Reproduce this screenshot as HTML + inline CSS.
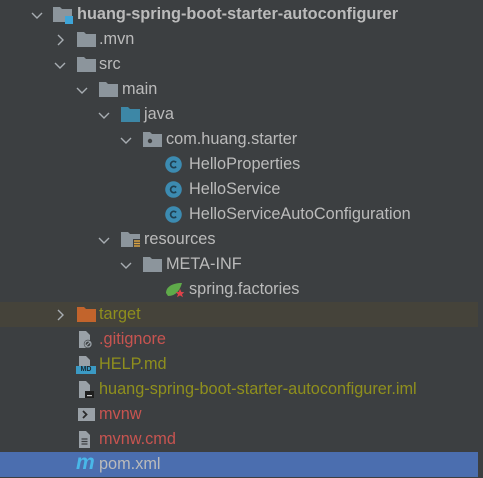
<!DOCTYPE html><html><head><style>
body{margin:0;width:483px;height:478px;background:#3c3f41;overflow:hidden;font-family:"Liberation Sans",sans-serif;font-size:16.3px;color:#bbbbbb}
.r{position:absolute;left:0;width:478px;height:25px}
.t{position:absolute;top:3px;white-space:nowrap}
.c{position:absolute;top:7px;width:12px;height:12px}
.i{position:absolute;top:4px;width:19px;height:17px}
</style></head><body>

<div class="r" style="top:2px"><svg class="c" style="left:31px" viewBox="0 0 12 12"><path d="M1 4l5 5 5-5" fill="none" stroke="#a8adb2" stroke-width="1.4"/></svg><svg class="i" style="left:53px" viewBox="0 0 19 17"><path d="M0 1h7l2 2h10v13H0z" fill="#8c959c"/></svg><div style="position:absolute;left:65px;top:14px;width:8px;height:8px;background:#3ea5d8"></div><div class="t" style="left:77px;font-weight:bold">huang-spring-boot-starter-autoconfigurer</div></div>
<div class="r" style="top:27px"><svg class="c" style="left:54px" viewBox="0 0 12 12"><path d="M4 1l5 5-5 5" fill="none" stroke="#a8adb2" stroke-width="1.4"/></svg><svg class="i" style="left:77px" viewBox="0 0 19 17"><path d="M0 1h7l2 2h10v13H0z" fill="#8c959c"/></svg><div class="t" style="left:99px">.mvn</div></div>
<div class="r" style="top:52px"><svg class="c" style="left:54px" viewBox="0 0 12 12"><path d="M1 4l5 5 5-5" fill="none" stroke="#a8adb2" stroke-width="1.4"/></svg><svg class="i" style="left:77px" viewBox="0 0 19 17"><path d="M0 1h7l2 2h10v13H0z" fill="#8c959c"/></svg><div class="t" style="left:99px">src</div></div>
<div class="r" style="top:77px"><svg class="c" style="left:76px" viewBox="0 0 12 12"><path d="M1 4l5 5 5-5" fill="none" stroke="#a8adb2" stroke-width="1.4"/></svg><svg class="i" style="left:99px" viewBox="0 0 19 17"><path d="M0 1h7l2 2h10v13H0z" fill="#8c959c"/></svg><div class="t" style="left:122px">main</div></div>
<div class="r" style="top:102px"><svg class="c" style="left:98px" viewBox="0 0 12 12"><path d="M1 4l5 5 5-5" fill="none" stroke="#a8adb2" stroke-width="1.4"/></svg><svg class="i" style="left:121px" viewBox="0 0 19 17"><path d="M0 1h7l2 2h10v13H0z" fill="#3d87a6"/></svg><div class="t" style="left:144px">java</div></div>
<div class="r" style="top:127px"><svg class="c" style="left:120px" viewBox="0 0 12 12"><path d="M1 4l5 5 5-5" fill="none" stroke="#a8adb2" stroke-width="1.4"/></svg><svg class="i" style="left:143px" viewBox="0 0 19 17"><path d="M0 1h7l2 2h10v13H0z" fill="#8c959c"/><circle cx="7" cy="10" r="2.2" fill="#3c3f41"/></svg><div class="t" style="left:166px">com.huang.starter</div></div>
<div class="r" style="top:152px"><svg class="i" style="left:165px;width:17px;height:17px" viewBox="0 0 16 16"><circle cx="8" cy="8" r="7.8" fill="#3c8bb1"/><path d="M10.5 6a3 3 0 1 0 0 4" fill="none" stroke="#1f3f50" stroke-width="1.6"/></svg><div class="t" style="left:189px">HelloProperties</div></div>
<div class="r" style="top:177px"><svg class="i" style="left:165px;width:17px;height:17px" viewBox="0 0 16 16"><circle cx="8" cy="8" r="7.8" fill="#3c8bb1"/><path d="M10.5 6a3 3 0 1 0 0 4" fill="none" stroke="#1f3f50" stroke-width="1.6"/></svg><div class="t" style="left:189px">HelloService</div></div>
<div class="r" style="top:202px"><svg class="i" style="left:165px;width:17px;height:17px" viewBox="0 0 16 16"><circle cx="8" cy="8" r="7.8" fill="#3c8bb1"/><path d="M10.5 6a3 3 0 1 0 0 4" fill="none" stroke="#1f3f50" stroke-width="1.6"/></svg><div class="t" style="left:189px">HelloServiceAutoConfiguration</div></div>
<div class="r" style="top:227px"><svg class="c" style="left:98px" viewBox="0 0 12 12"><path d="M1 4l5 5 5-5" fill="none" stroke="#a8adb2" stroke-width="1.4"/></svg><svg class="i" style="left:121px" viewBox="0 0 19 17"><path d="M0 1h7l2 2h10v13H0z" fill="#8c959c"/><rect x="12" y="8" width="7" height="9" fill="#3c3f41"/><path d="M13 10h6M13 12.5h6M13 15h6" stroke="#d9a343" stroke-width="1.4"/></svg><div class="t" style="left:144px">resources</div></div>
<div class="r" style="top:252px"><svg class="c" style="left:120px" viewBox="0 0 12 12"><path d="M1 4l5 5 5-5" fill="none" stroke="#a8adb2" stroke-width="1.4"/></svg><svg class="i" style="left:143px" viewBox="0 0 19 17"><path d="M0 1h7l2 2h10v13H0z" fill="#8c959c"/></svg><div class="t" style="left:166px">META-INF</div></div>
<div class="r" style="top:277px"><svg class="i" style="left:166px" viewBox="0 0 19 17"><path d="M0 12c0-6 6-10 16-10-2 7-6 13-14 13z" fill="#5faa4a"/><path d="M14 8l1.3 3 3 .2-2.3 2 1 3-3-1.8-3 1.8 1-3-2.3-2 3-.2z" fill="#e0424a"/></svg><div class="t" style="left:189px">spring.factories</div></div>
<div class="r" style="top:302px;background:#45433a"><svg class="c" style="left:54px" viewBox="0 0 12 12"><path d="M4 1l5 5-5 5" fill="none" stroke="#a8adb2" stroke-width="1.4"/></svg><svg class="i" style="left:77px" viewBox="0 0 19 17"><path d="M0 1h7l2 2h10v13H0z" fill="#c2642c"/></svg><div class="t" style="left:99px;color:#8f8f1d">target</div></div>
<div class="r" style="top:327px"><svg class="i" style="left:77px" viewBox="0 0 19 17"><path d="M2 0h7l4 4v13H2z" fill="#9aa1a7"/><circle cx="11" cy="13" r="4.2" fill="#3c3f41"/><circle cx="11" cy="13" r="3" fill="none" stroke="#9aa1a7" stroke-width="1.3"/><path d="M9 15l4-4" stroke="#9aa1a7" stroke-width="1.2"/></svg><div class="t" style="left:99px;color:#c75450">.gitignore</div></div>
<div class="r" style="top:352px"><svg class="i" style="left:77px" viewBox="0 0 19 17"><path d="M2 0h7l4 4v13H2z" fill="#9aa1a7"/></svg><div style="position:absolute;left:76px;top:14px;width:20px;height:8px;background:#3b9ac4;font-size:7px;color:#1a2a33;font-weight:bold;line-height:8px;text-align:center">MD</div><div class="t" style="left:99px;color:#8f8f1d">HELP.md</div></div>
<div class="r" style="top:377px"><svg class="i" style="left:77px" viewBox="0 0 19 17"><path d="M2 0h7l4 4v13H2z" fill="#9aa1a7"/><rect x="8" y="10" width="9" height="7" fill="#1e1e1e"/><rect x="10" y="14" width="5" height="1.2" fill="#ccc"/></svg><div class="t" style="left:99px;color:#8f8f1d">huang-spring-boot-starter-autoconfigurer.iml</div></div>
<div class="r" style="top:402px"><svg class="i" style="left:77px" viewBox="0 0 19 17"><rect x="1" y="2" width="17" height="13" fill="#9aa1a7"/><path d="M6 5l3.5 3.5-3.5 3.5" fill="none" stroke="#2b2b2b" stroke-width="1.8"/></svg><div class="t" style="left:99px;color:#c75450">mvnw</div></div>
<div class="r" style="top:427px"><svg class="i" style="left:77px" viewBox="0 0 19 17"><path d="M2 0h7l4 4v13H2z" fill="#9aa1a7"/><path d="M4.5 8h6M4.5 10.5h6M4.5 13h6" stroke="#3c3f41" stroke-width="1.2"/></svg><div class="t" style="left:99px;color:#c75450">mvnw.cmd</div></div>
<div class="r" style="top:452px;background:#4b6eaf"><div class="t" style="left:76px;top:-1px;font-size:21px;font-style:italic;font-weight:bold;color:#49b7e8">m</div><div class="t" style="left:99px">pom.xml</div></div>
</body></html>
